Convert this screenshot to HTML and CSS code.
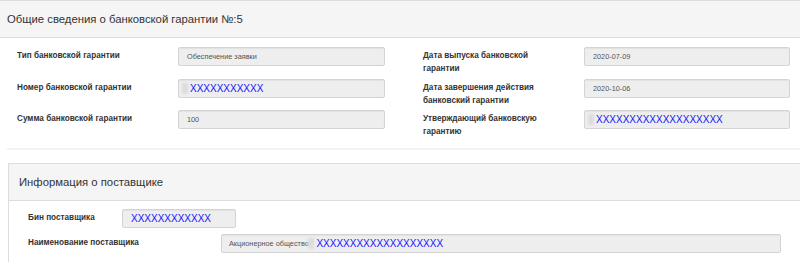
FILE: index.html
```html
<!DOCTYPE html>
<html lang="ru">
<head>
  <meta charset="UTF-8">
  <title>Банковская гарантия</title>
  <link rel="stylesheet" href="styles.css">
</head>
<body>

  <div class="panel panel-main">
    <div class="panel-heading">Общие сведения о банковской гарантии №:5</div>
    <div class="panel-body">
      <div class="grid">
        <div class="col">
          <div class="field">
            <label>Тип банковской гарантии</label>
            <div class="input">Обеспечение заявки</div>
          </div>
          <div class="field">
            <label>Номер банковской гарантии</label>
            <div class="input"><span class="smudge"></span><span class="hidden">XXXXXXXXXXX</span></div>
          </div>
          <div class="field">
            <label>Сумма банковской гарантии</label>
            <div class="input">100</div>
          </div>
        </div>
        <div class="col col-right">
          <div class="field">
            <label>Дата выпуска банковской гарантии</label>
            <div class="input">2020-07-09</div>
          </div>
          <div class="field">
            <label>Дата завершения действия банковский гарантии</label>
            <div class="input">2020-10-06</div>
          </div>
          <div class="field">
            <label>Утверждающий банковскую гарантию</label>
            <div class="input"><span class="smudge"></span><span class="hidden">XXXXXXXXXXXXXXXXXXX</span></div>
          </div>
        </div>
      </div>
      <div class="divider"></div>
    </div>
  </div>

  <div class="panel panel-supplier">
    <div class="panel-heading">Информация о поставщике</div>
    <div class="panel-body">
      <div class="field">
        <label class="label-bin">Бин поставщика</label>
        <div class="input input-bin"><span class="hidden">XXXXXXXXXXXX</span></div>
      </div>
      <div class="field">
        <label class="label-name">Наименование поставщика</label>
        <div class="input input-name">Акционерное общество "<span class="smudge"></span><span class="hidden">XXXXXXXXXXXXXXXXXXX</span></div>
      </div>
    </div>
  </div>

</body>
</html>
```

FILE: styles.css
```css
* {
  box-sizing: border-box;
}

body {
  margin: 0;
  font-family: "Liberation Sans", Arial, sans-serif;
  color: #333;
  background: #fff;
  overflow: hidden;
}

.panel {
  border: 1px solid #ddd;
  background: #fff;
}

.panel-heading {
  height: 37px;
  background: #f5f5f5;
  border-bottom: 1px solid #ddd;
  font-size: 11.3px;
  line-height: 36px;
  color: #333;
}

/* первая панель */
.panel-main {
  margin-left: -1px;
  width: 840px;
  border-bottom: none;
  border-right: none;
  border-left: none;
}

.panel-main .panel-heading {
  padding-left: 8px;
}

.panel-main .panel-body {
  padding-top: 9px;
}

.grid {
  display: flex;
  padding-left: 18px;
}

.col {
  width: 406px;
  display: flex;
  flex-direction: column;
  gap: 12.5px;
}

.field {
  display: flex;
  align-items: flex-start;
  height: 19px;
}

label {
  display: block;
  flex: none;
  width: 161px;
  padding-right: 36px;
  padding-top: 2px;
  font-size: 8.2px;
  font-weight: bold;
  line-height: 13px;
  color: #333;
}

.input {
  flex: none;
  width: 207px;
  height: 19px;
  background: #eee;
  border: 1px solid #d4d4d4;
  border-radius: 2px;
  box-shadow: inset 0 1px 1px rgba(0,0,0,0.05);
  padding-left: 8px;
  font-size: 7.3px;
  line-height: 17px;
  color: #555;
  white-space: nowrap;
  overflow: hidden;
}

.col-right .input {
  width: 206px;
}

.hidden {
  font-size: 10px;
  color: #1414ff;
  vertical-align: top;
}

.smudge {
  display: inline-block;
  width: 6px;
  height: 11px;
  margin: 3px 2px 0 -5px;
  vertical-align: top;
  background: #ddd;
  filter: blur(1px);
}

.divider {
  margin: 19px 0 0 8px;
  border-top: 2px solid #f2f2f2;
}

/* вторая панель */
.panel-supplier {
  margin: 13px 0 0 8px;
  width: 840px;
  border-right: none;
}

.panel-supplier .panel-heading {
  padding-left: 10px;
}

.panel-supplier .panel-body {
  padding: 8px 0 10px 19px;
  display: flex;
  flex-direction: column;
  gap: 6px;
}

.label-bin {
  width: 94px;
  padding-right: 0;
}

.input-bin {
  width: 114px;
}

.label-name {
  width: 193px;
  padding-right: 0;
}

.input-name {
  width: 560px;
  padding-left: 7px;
}
```
